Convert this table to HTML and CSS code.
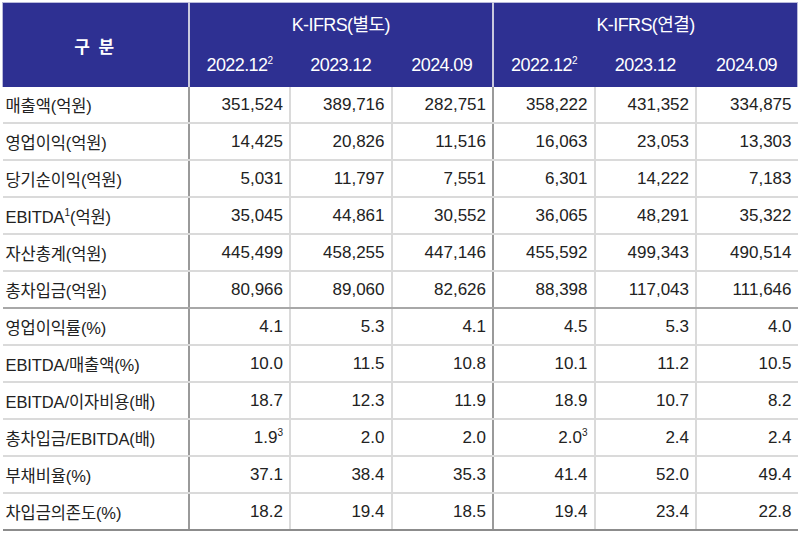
FILE: index.html
```html
<!DOCTYPE html>
<html lang="ko">
<head>
<meta charset="utf-8">
<title>K-IFRS 재무지표</title>
<link rel="stylesheet" href="styles.css">
</head>
<body>
<div class="wrap">
<table class="fin">
  <colgroup>
    <col class="c-label">
    <col class="c-num"><col class="c-num"><col class="c-num">
    <col class="c-num"><col class="c-num"><col class="c-num">
  </colgroup>
  <thead>
    <tr class="h1">
      <th rowspan="2" class="h-label">구 분</th>
      <th colspan="3" class="h-group">K-IFRS(별도)</th>
      <th colspan="3" class="h-group">K-IFRS(연결)</th>
    </tr>
    <tr class="h2">
      <th class="h-year sep">2022.12<sup>2</sup></th>
      <th class="h-year">2023.12</th>
      <th class="h-year">2024.09</th>
      <th class="h-year sep">2022.12<sup>2</sup></th>
      <th class="h-year">2023.12</th>
      <th class="h-year">2024.09</th>
    </tr>
  </thead>
  <tbody>
    <tr><td class="lbl">매출액(억원)</td><td class="sep">351,524</td><td>389,716</td><td>282,751</td><td class="sep">358,222</td><td>431,352</td><td>334,875</td></tr>
    <tr><td class="lbl">영업이익(억원)</td><td class="sep">14,425</td><td>20,826</td><td>11,516</td><td class="sep">16,063</td><td>23,053</td><td>13,303</td></tr>
    <tr><td class="lbl">당기순이익(억원)</td><td class="sep">5,031</td><td>11,797</td><td>7,551</td><td class="sep">6,301</td><td>14,222</td><td>7,183</td></tr>
    <tr><td class="lbl">EBITDA<sup>1</sup>(억원)</td><td class="sep">35,045</td><td>44,861</td><td>30,552</td><td class="sep">36,065</td><td>48,291</td><td>35,322</td></tr>
    <tr><td class="lbl">자산총계(억원)</td><td class="sep">445,499</td><td>458,255</td><td>447,146</td><td class="sep">455,592</td><td>499,343</td><td>490,514</td></tr>
    <tr class="grp-end"><td class="lbl">총차입금(억원)</td><td class="sep">80,966</td><td>89,060</td><td>82,626</td><td class="sep">88,398</td><td>117,043</td><td>111,646</td></tr>
    <tr><td class="lbl">영업이익률(%)</td><td class="sep">4.1</td><td>5.3</td><td>4.1</td><td class="sep">4.5</td><td>5.3</td><td>4.0</td></tr>
    <tr><td class="lbl">EBITDA/매출액(%)</td><td class="sep">10.0</td><td>11.5</td><td>10.8</td><td class="sep">10.1</td><td>11.2</td><td>10.5</td></tr>
    <tr><td class="lbl">EBITDA/이자비용(배)</td><td class="sep">18.7</td><td>12.3</td><td>11.9</td><td class="sep">18.9</td><td>10.7</td><td>8.2</td></tr>
    <tr><td class="lbl">총차입금/EBITDA(배)</td><td class="sep">1.9<sup>3</sup></td><td>2.0</td><td>2.0</td><td class="sep">2.0<sup>3</sup></td><td>2.4</td><td>2.4</td></tr>
    <tr><td class="lbl">부채비율(%)</td><td class="sep">37.1</td><td>38.4</td><td>35.3</td><td class="sep">41.4</td><td>52.0</td><td>49.4</td></tr>
    <tr class="last"><td class="lbl">차입금의존도(%)</td><td class="sep">18.2</td><td>19.4</td><td>18.5</td><td class="sep">19.4</td><td>23.4</td><td>22.8</td></tr>
  </tbody>
</table>
</div>
</body>
</html>
```

FILE: styles.css
```css
html, body {
  margin: 0;
  padding: 0;
  background: #ffffff;
}

.wrap {
  padding: 2px 0 0 2px;
}

.fin {
  width: 795px;
  table-layout: fixed;
  border-collapse: collapse;
  font-family: "Liberation Sans", "Noto Sans CJK KR", sans-serif;
  color: #222222;
}

.c-label { width: 186px; }
.c-num { width: 101.5px; }

.fin thead th {
  background: #2e3092;
  color: #ffffff;
  font-weight: normal;
  padding: 0;
  border-top: 1px solid #b9badb;
}

.fin thead tr.h2 th {
  border-top: none;
}

.h-label {
  font-size: 17px;
  font-weight: bold !important;
  letter-spacing: 2px;
  border-left: 1px solid #b9badb;
  border-right: 2px solid #c9c9de;
  text-align: center;
}

.h-group {
  height: 40px;
  font-size: 18px;
  letter-spacing: -0.6px;
  text-align: center;
  vertical-align: middle;
}

.h-group + .h-group {
  border-left: 2px solid #c9c9de;
  border-right: 1px solid #b9badb;
}

.h-year {
  height: 44px;
  font-size: 18px;
  letter-spacing: -0.6px;
  text-align: center;
  vertical-align: middle;
}

.h2 th:nth-child(4) {
  border-left: 2px solid #c9c9de;
}

.h2 th:last-child {
  border-right: 1px solid #b9badb;
}

.fin sup {
  font-size: 10px;
  line-height: 0;
  vertical-align: 7px;
  letter-spacing: 0;
}

.fin tbody td {
  height: 35px;
  padding: 0 6px 0 0;
  font-size: 17px;
  text-align: right;
  vertical-align: middle;
  border-bottom: 2px solid #dadada;
  border-left: 2px solid #dadada;
  white-space: nowrap;
}

.fin tbody td.lbl {
  text-align: left;
  padding: 0 0 0 3px;
  border-left: none;
  font-size: 16.5px;
  letter-spacing: -0.1px;
}

.fin tbody td.sep {
  border-left: 2px solid #9a9a9a;
}

.fin tbody tr.grp-end td {
  border-bottom: 2px solid #a8a8a8;
}

.fin tbody tr.last td {
  border-bottom: 2px solid #8c8c8c;
}
```
